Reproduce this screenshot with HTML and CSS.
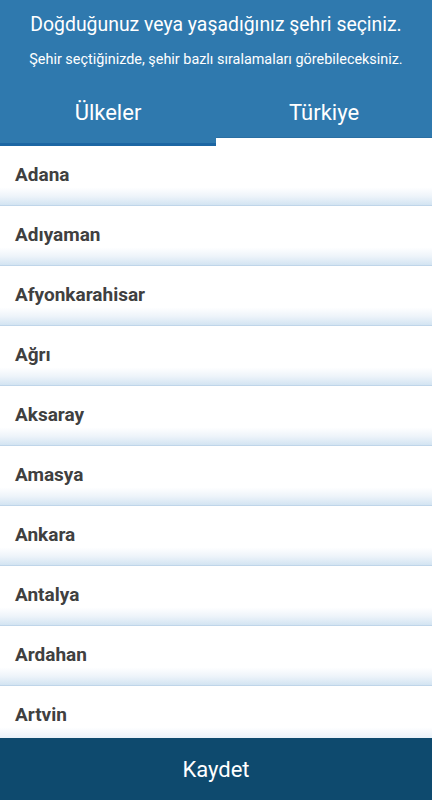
FILE: index.html
```html
<!DOCTYPE html>
<html lang="tr">
<head>
<meta charset="utf-8">
<link rel="stylesheet" href="styles.css">
</head>
<body>
<div class="app">
  <header class="head">
    <div class="title">Doğduğunuz veya yaşadığınız şehri seçiniz.</div>
    <div class="sub">Şehir seçtiğinizde, şehir bazlı sıralamaları görebileceksiniz.</div>
  </header>
  <div class="tabs">
    <div class="tab tab-left">Ülkeler</div>
    <div class="tab tab-right">Türkiye</div>
  </div>
  <ul class="list">
    <li class="row">Adana</li>
    <li class="row">Adıyaman</li>
    <li class="row">Afyonkarahisar</li>
    <li class="row">Ağrı</li>
    <li class="row">Aksaray</li>
    <li class="row">Amasya</li>
    <li class="row">Ankara</li>
    <li class="row">Antalya</li>
    <li class="row">Ardahan</li>
    <li class="row">Artvin</li>
  </ul>
  <footer class="save">Kaydet</footer>
</div>
</body>
</html>
```
FILE: styles.css
```css
* { box-sizing: border-box; }
html, body { margin: 0; padding: 0; }
body {
  font-family: Roboto, "Noto Sans", "Liberation Sans", sans-serif;
  background: #fff;
}
.app {
  width: 432px;
  height: 800px;
  display: flex;
  flex-direction: column;
  overflow: hidden;
}
.head {
  background: #2f79ae;
  color: #fff;
  text-align: center;
  padding-top: 12px;
  height: 80px;
}
.title {
  font-size: 19.4px;
  line-height: 26px;
}
.sub {
  font-size: 14.4px;
  line-height: 20px;
  margin-top: 12px;
  white-space: nowrap;
}
.tabs {
  display: flex;
  align-items: flex-start;
  height: 66px;
  flex-shrink: 0;
}
.tab {
  flex: 1;
  background: #2f79ae;
  color: #fff;
  text-align: center;
  font-size: 22px;
  line-height: 28px;
  padding-top: 19px;
}
.tab-left {
  height: 66px;
  border-bottom: 3px solid #1c66a3;
}
.tab-right {
  height: 58px;
  border-bottom: 1px solid #2a6fa3;
}
.list {
  list-style: none;
  margin: 0;
  padding: 0;
  flex: 1;
  overflow: hidden;
}
.row {
  height: 60px;
  padding-left: 15px;
  display: flex;
  align-items: center;
  padding-bottom: 2px;
  font-size: 19px;
  font-weight: 700;
  color: #404040;
  background: linear-gradient(to bottom, #fff 0, #fff 70%, #eef4fa 85%, #d3e4f2 100%);
  border-bottom: 1px solid #bfd5e9;
}
.save {
  height: 62px;
  flex-shrink: 0;
  background: #0e4a6e;
  color: #fff;
  font-size: 22px;
  display: flex;
  align-items: center;
  justify-content: center;
}
```
